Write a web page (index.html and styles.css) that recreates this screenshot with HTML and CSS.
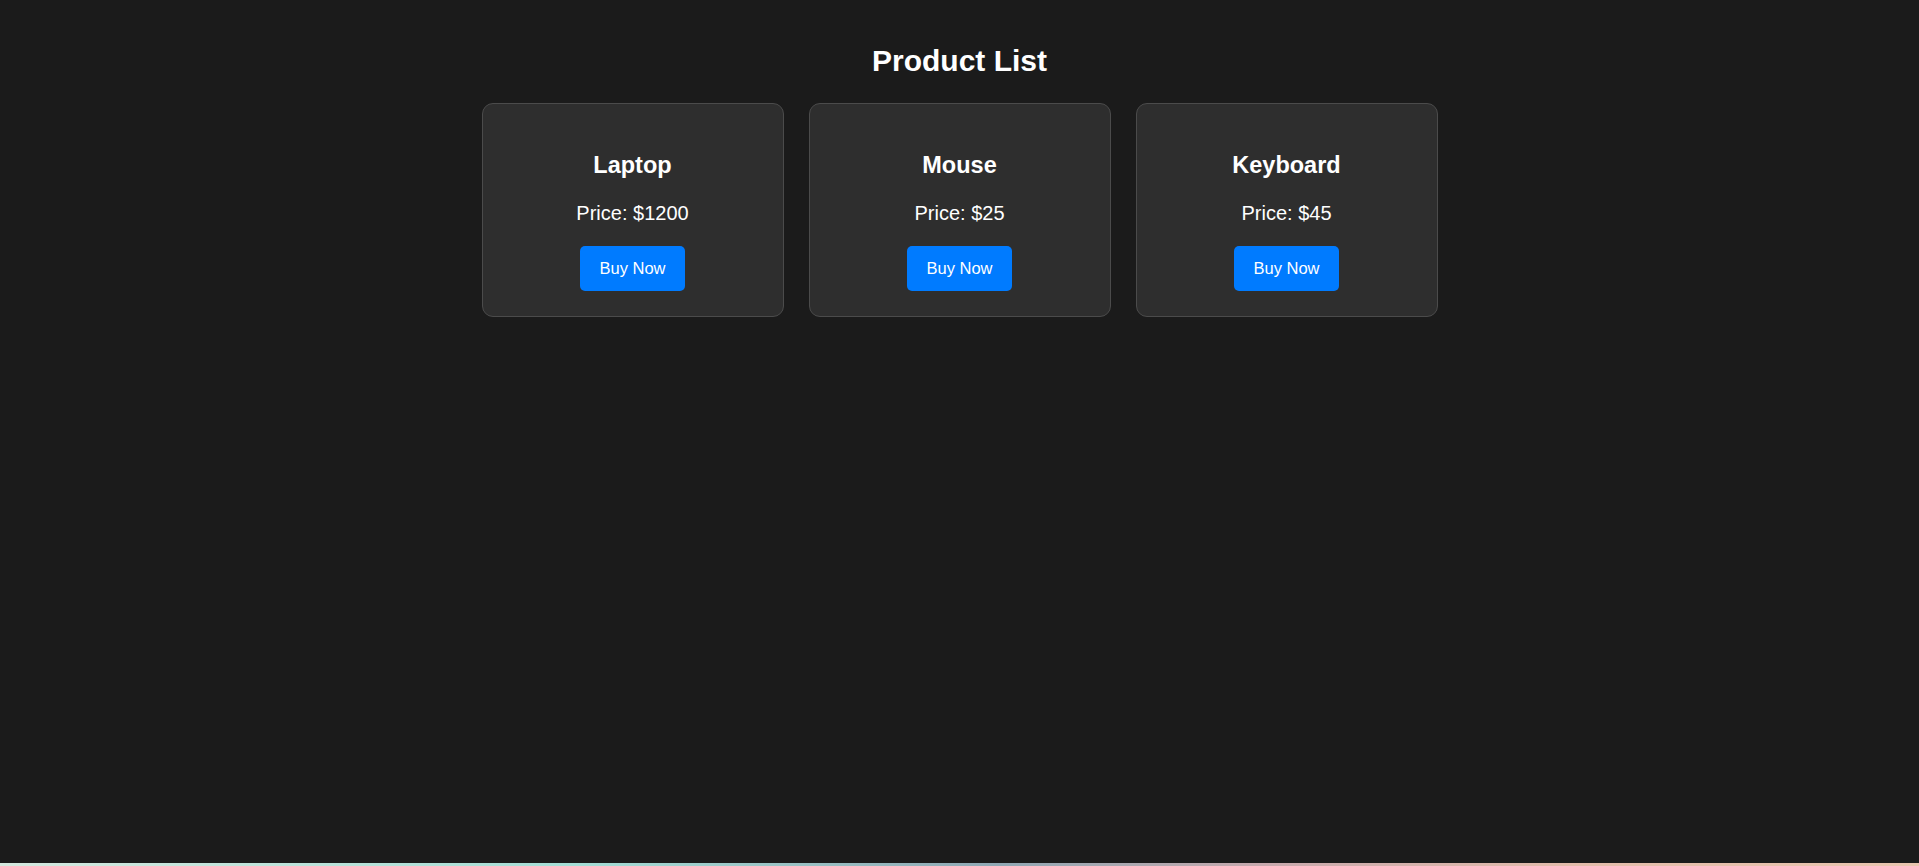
FILE: index.html
```html
<!DOCTYPE html>
<html lang="en">
<head>
<meta charset="utf-8">
<title>Product List</title>
<link rel="stylesheet" href="styles.css">
</head>
<body>
<main class="page">
  <h1 class="page-title">Product List</h1>
  <div class="product-list">
    <div class="card">
      <h2 class="card-title">Laptop</h2>
      <p class="card-price">Price: $1200</p>
      <button class="buy-btn">Buy Now</button>
    </div>
    <div class="card">
      <h2 class="card-title">Mouse</h2>
      <p class="card-price">Price: $25</p>
      <button class="buy-btn">Buy Now</button>
    </div>
    <div class="card">
      <h2 class="card-title">Keyboard</h2>
      <p class="card-price">Price: $45</p>
      <button class="buy-btn">Buy Now</button>
    </div>
  </div>
</main>
<div class="bottom-strip"></div>
</body>
</html>
```

FILE: styles.css
```css
html, body {
  margin: 0;
  padding: 0;
}
body {
  background: #1b1b1b;
  color: #ffffff;
  font-family: "Liberation Sans", Arial, sans-serif;
  height: 100vh;
  display: flex;
  flex-direction: column;
  overflow: hidden;
}
.page {
  flex: 1;
  display: flex;
  flex-direction: column;
  align-items: center;
  padding-top: 43px;
}
.page-title {
  margin: 0 0 25px;
  font-size: 30px;
  font-weight: bold;
  line-height: 35px;
}
.product-list {
  display: flex;
  justify-content: center;
  gap: 25px;
}
.card {
  box-sizing: border-box;
  width: 302px;
  height: 214px;
  background: #2e2e2e;
  border: 1px solid #4b4b4b;
  border-radius: 11px;
  display: flex;
  flex-direction: column;
  align-items: center;
  padding: 48px 20px 0;
}
.card-title {
  margin: 0;
  font-size: 23.5px;
  font-weight: bold;
  line-height: 27px;
}
.card-price {
  margin: 23px 0 0;
  font-size: 20px;
  line-height: 23px;
}
.buy-btn {
  margin-top: 21px;
  background: #007bff;
  color: #ffffff;
  border: none;
  border-radius: 5px;
  font-family: "Liberation Sans", Arial, sans-serif;
  font-size: 16.5px;
  line-height: 19px;
  padding: 13px 19px;
  cursor: pointer;
}
.bottom-strip {
  height: 3px;
  flex: none;
  background: linear-gradient(to right, #d4e9df 0%, #a3ded6 30%, #8fa8b4 52%, #c8a9ad 66%, #e3bcaa 82%, #e8c5ae 100%);
}
```
